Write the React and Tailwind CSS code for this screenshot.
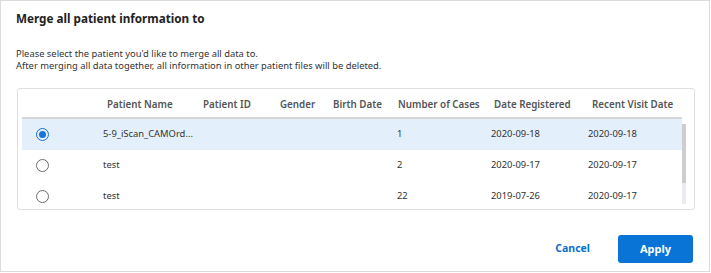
import React from 'react';

const patients = [
  { name: '5-9_iScan_CAMOrd...', id: '', gender: '', birth: '', cases: '1', registered: '2020-09-18', visit: '2020-09-18', selected: true },
  { name: 'test', id: '', gender: '', birth: '', cases: '2', registered: '2020-09-17', visit: '2020-09-17' },
  { name: 'test', id: '', gender: '', birth: '', cases: '22', registered: '2019-07-26', visit: '2020-09-17' },
];

const cols = 'grid grid-cols-[81px_97px_77px_53px_67px_94px_97px_1fr]';

const Radio = ({ checked }) =>
  checked ? (
    <span className="flex h-[13px] w-[13px] items-center justify-center rounded-full border-[1.5px] border-[#1a73d9]">
      <span className="h-[7px] w-[7px] rounded-full bg-[#1a73d9]" />
    </span>
  ) : (
    <span className="block h-[13px] w-[13px] rounded-full border-[1.5px] border-[#6b6b6b] bg-white" />
  );

const App = () => {
  return (
    <div className="w-[710px] h-[272px] bg-white border border-[#dcdcdc] flex flex-col font-['Noto_Sans',sans-serif] text-[#333]">
      {/* Title */}
      <h1 className="pl-[15px] pt-[8px] text-[11.7px] font-bold text-[#222] leading-[18px]">
        Merge all patient information to
      </h1>

      {/* Description */}
      <div className="pl-[15px] mt-[21px] text-[9.4px] leading-[11.5px] text-[#333]">
        <p>Please select the patient you'd like to merge all data to.</p>
        <p>After merging all data together, all information in other patient files will be deleted.</p>
      </div>

      {/* Patient table */}
      <div className="ml-[16px] mt-[17px] w-[678px] h-[122px] rounded-[3px] border border-[#dedede] pl-[4px] pr-[8px] flex">
        <div className="flex-1 flex flex-col">
          <div className={`${cols} h-[30px] pt-[4px] items-center border-b-2 border-[#d6d6d6] text-[9.8px] font-semibold text-[#555]`}>
            <span />
            <span className="pl-[4px]">Patient Name</span>
            <span className="pl-[3px]">Patient ID</span>
            <span className="pl-[3px]">Gender</span>
            <span className="pl-[3px]">Birth Date</span>
            <span className="pl-[1px]">Number of Cases</span>
            <span className="pl-[3px]">Date Registered</span>
            <span className="pl-[4px]">Recent Visit Date</span>
          </div>
          <div className="flex-1 overflow-hidden">
            {patients.map((p, i) => (
              <div
                key={i}
                className={`${cols} h-[31px] items-center text-[9.4px] ${p.selected ? 'bg-[#e3f0fc]' : ''}`}
              >
                <span className="pl-[14px]">
                  <Radio checked={p.selected} />
                </span>
                <span>{p.name}</span>
                <span>{p.id}</span>
                <span>{p.gender}</span>
                <span>{p.birth}</span>
                <span>{p.cases}</span>
                <span>{p.registered}</span>
                <span>{p.visit}</span>
              </div>
            ))}
          </div>
        </div>
        {/* Scrollbar */}
        <div className="w-[4px] mt-[35px] mb-[5px] bg-[#ececf0] flex flex-col">
          <div className="h-[59px] bg-[#cdcdd0]" />
        </div>
      </div>

      {/* Footer buttons */}
      <div className="mt-auto mb-[8px] pr-[16px] flex items-center justify-end gap-[28px]">
        <button className="text-[10.5px] font-bold text-[#0b6fd1]">Cancel</button>
        <button className="w-[75px] h-[28px] rounded-[3px] bg-[#0a73d6] text-[11px] font-bold text-white">
          Apply
        </button>
      </div>
    </div>
  );
};

export default App;
